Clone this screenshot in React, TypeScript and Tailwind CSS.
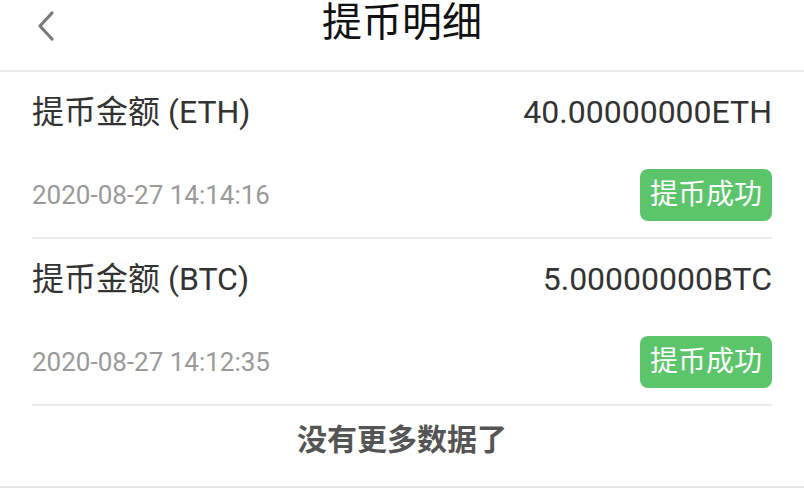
import React from 'react';

const records = [
  { coin: 'ETH', amount: '40.00000000ETH', time: '2020-08-27 14:14:16' },
  { coin: 'BTC', amount: '5.00000000BTC', time: '2020-08-27 14:12:35' },
];

const font = { fontFamily: 'Roboto, "Noto Sans CJK SC", sans-serif' };

export default function App() {
  return (
    <div className="w-[804px] h-[500px] bg-white overflow-hidden" style={font}>
      <header className="relative h-[72px] flex justify-center pt-[3px] border-b-2 border-[#ececec]">
        <button className="absolute left-[30px] top-[8px] w-[32px] h-[36px] flex items-center justify-center">
          <svg width="20" height="32" viewBox="0 0 20 32" fill="none">
            <path d="M16 3 L4 16 L16 29" stroke="#7a7a7a" strokeWidth="3.2" strokeLinecap="round" strokeLinejoin="round" />
          </svg>
        </button>
        <h1 className="text-[40px] leading-[40px] text-[#111]">提币明细</h1>
      </header>

      {records.map((r) => (
        <div key={r.coin} className="mx-[32px] pt-[20px] pb-[16px] border-b-2 border-[#ececec]">
          <div className="flex items-center justify-between h-[40px] text-[32px] text-[#333]">
            <span>提币金额 ({r.coin})</span>
            <span>{r.amount}</span>
          </div>
          <div className="mt-[37px] flex items-center justify-between h-[52px]">
            <span className="text-[26px] text-[#9a9a9a]">{r.time}</span>
            <span className="h-[52px] px-[10px] rounded-[8px] bg-[#5cc56b] text-white text-[28px] leading-[52px]">
              提币成功
            </span>
          </div>
        </div>
      ))}

      <div className="h-[82px] pt-[14px] border-b-2 border-[#e6e6e6] text-center">
        <span className="text-[30px] leading-[40px] font-bold text-[#555]">没有更多数据了</span>
      </div>
    </div>
  );
}
